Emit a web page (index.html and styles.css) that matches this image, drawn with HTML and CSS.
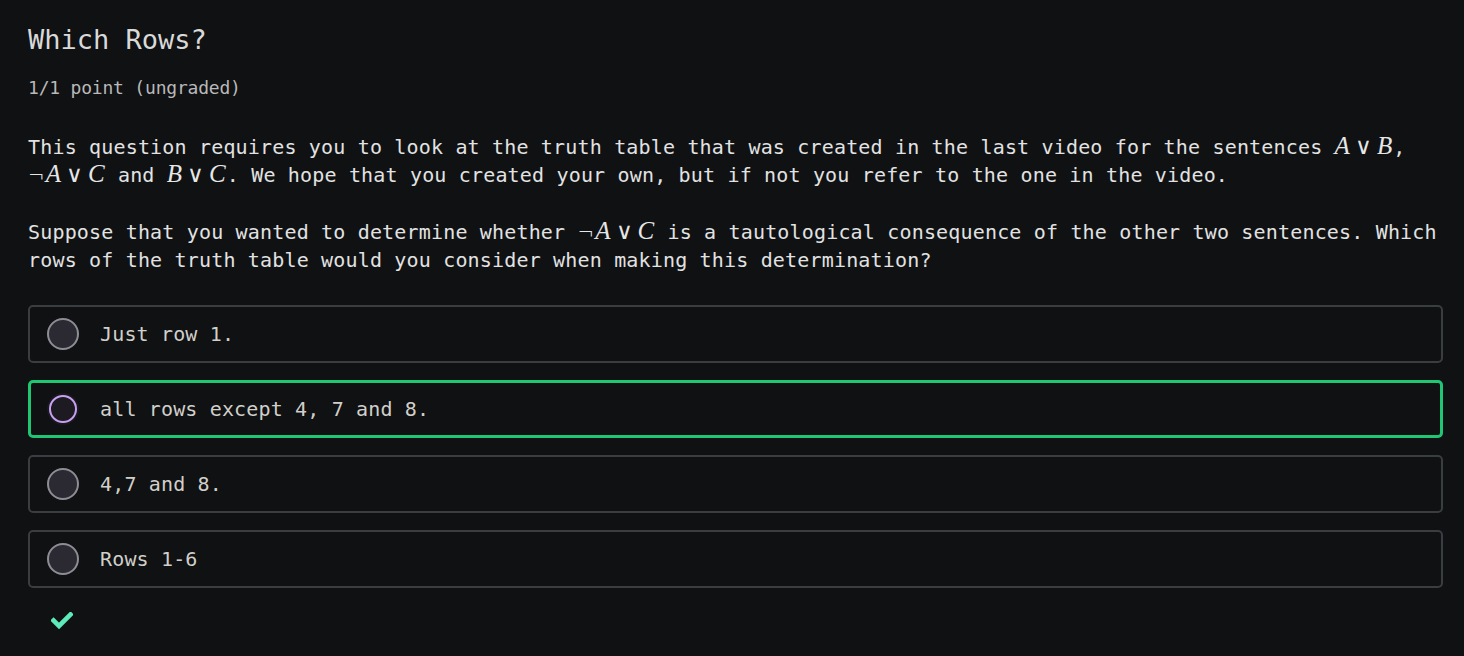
FILE: index.html
```html
<!DOCTYPE html>
<html lang="en">
<head>
<meta charset="utf-8">
<title>Which Rows?</title>
<link rel="stylesheet" href="styles.css">
</head>
<body>
<main class="problem">
  <h1 class="title">Which Rows?</h1>
  <div class="points">1/1 point (ungraded)</div>
  <p class="para">This question requires you to look at the truth table that was created in the last video for the sentences <span class="math"><i>A</i><span class="op">∨</span><i>B</i></span>, <span class="math"><span class="neg">¬</span><i>A</i><span class="op">∨</span><i>C</i></span> and <span class="math"><i>B</i><span class="op">∨</span><i>C</i></span>. We hope that you created your own, but if not you refer to the one in the video.</p>
  <p class="para">Suppose that you wanted to determine whether <span class="math"><span class="neg">¬</span><i>A</i><span class="op">∨</span><i>C</i></span> is a tautological consequence of the other two sentences. Which rows of the truth table would you consider when making this determination?</p>
  <div class="options">
    <label class="option"><span class="radio"></span><span class="opt-text">Just row 1.</span></label>
    <label class="option selected"><span class="radio"></span><span class="opt-text">all rows except 4, 7 and 8.</span></label>
    <label class="option"><span class="radio"></span><span class="opt-text">4,7 and 8.</span></label>
    <label class="option"><span class="radio"></span><span class="opt-text">Rows 1-6</span></label>
  </div>
  <div class="status">
    <svg width="22" height="18" viewBox="0 0 22 18"><path d="M2.5 8.5 L8 14 L19.5 2.5" fill="none" stroke="#5eebbb" stroke-width="4.6" stroke-linecap="square"/></svg>
  </div>
</main>
</body>
</html>
```

FILE: styles.css
```css
html, body {
  margin: 0;
  padding: 0;
  background: #0f1113;
}
body {
  font-family: "DejaVu Sans Mono", "Liberation Mono", monospace;
  color: #e2e2e2;
}
.problem {
  padding: 24px 21px 0 28px;
}
.title {
  margin: 0;
  font-size: 27px;
  line-height: 32px;
  font-weight: normal;
  color: #d9d9d9;
  letter-spacing: 0;
}
.points {
  margin-top: 20px;
  font-size: 18px;
  line-height: 24px;
  color: #b9b9b9;
  letter-spacing: -0.2px;
}
.para {
  margin: 33px 0 0 0;
  font-size: 20px;
  line-height: 28px;
  letter-spacing: 0.17px;
}
.para + .para {
  margin-top: 29px;
}
.math {
  font-family: "Liberation Serif", "DejaVu Serif", serif;
  font-size: 25px;
  line-height: 0;
  letter-spacing: 0;
  white-space: nowrap;
  color: #e6e6e6;
}
.math i {
  font-style: italic;
  padding-right: 1px;
}
.math .op {
  font-family: "DejaVu Sans", sans-serif;
  font-size: 23px;
  padding: 0 5px 0 4px;
  font-weight: 200;
}
.math .neg {
  font-family: "DejaVu Sans", sans-serif;
  font-size: 20px;
  font-weight: 200;
  padding-right: 1px;
}
.options {
  margin-top: 31px;
  display: flex;
  flex-direction: column;
  gap: 17px;
}
.option {
  display: flex;
  align-items: center;
  height: 58px;
  box-sizing: border-box;
  border: 2px solid #3a3e40;
  border-radius: 5px;
  padding-left: 17px;
  font-size: 20px;
  color: #d2cfca;
  letter-spacing: 0.15px;
}
.option.selected {
  border: 3px solid #1fc774;
  padding-left: 16px;
}
.radio {
  width: 32px;
  height: 32px;
  box-sizing: border-box;
  border-radius: 50%;
  border: 2.5px solid #8e8c94;
  background: #2b2a33;
  margin-right: 21px;
  flex: none;
}
.option.selected .radio {
  width: 28px;
  height: 28px;
  margin: 0 23px 0 2px;
  border-color: #c8a0f0;
  background: #1e1a22;
  box-shadow: 0 0 0 2px #1a1820;
}
.status {
  margin-top: 24px;
  padding-left: 23px;
  height: 20px;
}
.status svg {
  display: block;
}
```
